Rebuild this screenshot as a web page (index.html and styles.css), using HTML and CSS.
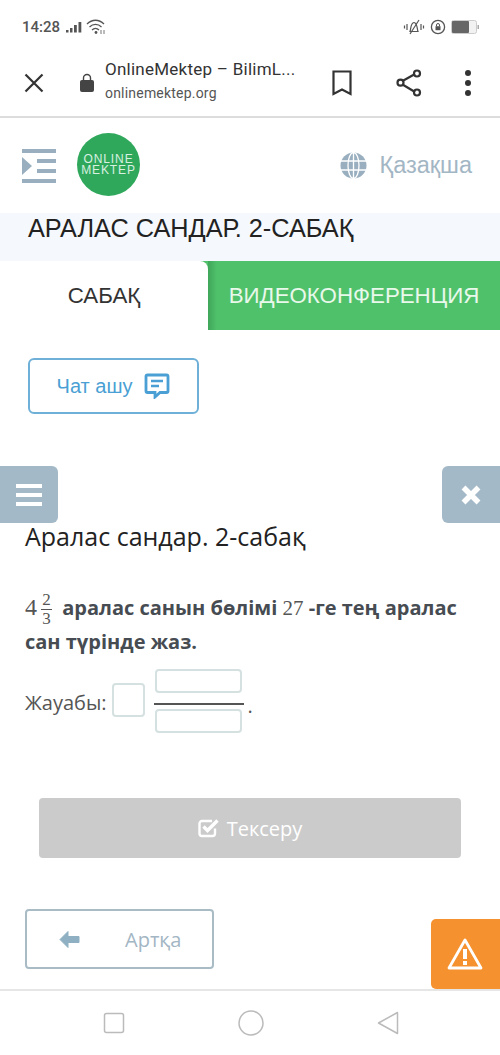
FILE: index.html
```html
<!DOCTYPE html>
<html lang="kk">
<head>
    <meta charset="UTF-8">
    <meta name="viewport" content="width=device-width, initial-scale=1.0">
    <title>Аралас сандар. 2-сабақ</title>
    <link rel="stylesheet" href="styles.css">
</head>
<body>
    <div class="page">
        <div class="status-bar">
            <div class="status-left">
                <span class="clock">14:28</span>
                <svg width="16" height="12" viewBox="0 0 16 12"><g fill="#555"><rect x="0" y="9" width="2.500" height="2.500"/><rect x="4" y="7" width="2.500" height="4.500"/><rect x="8" y="4" width="2.800" height="7.500"/><rect x="12.500" y="1" width="2.800" height="10.500"/></g></svg>
                <svg width="20" height="16" viewBox="0 0 20 16"><g fill="none" stroke="#555" stroke-width="1.300"><path d="M1 5 C6 0 13 0 18 5"/><path d="M3.500 8 C7 4.500 12 4.500 15.500 8"/><path d="M6 11 C8 9 11 9 13 11"/></g><circle cx="10" cy="13.500" r="1.400" fill="#555"/><path d="M15 15V11M18 15V11" stroke="#777" stroke-width="1"/></svg>
            </div>
            <div class="status-right">
                <svg width="22" height="16" viewBox="0 0 22 16"><g fill="none" stroke="#555" stroke-width="1.200"><path d="M7 12.500C8 10 7.500 4 11 3.500C14.500 4 14 10 15 12.500Z"/><path d="M16 1L7 15"/><path d="M4 5V11M1.500 6.500V9.500M18 5V11M20.500 6.500V9.500"/></g></svg>
                <svg width="16" height="16" viewBox="0 0 16 16"><circle cx="8" cy="8" r="6.600" fill="none" stroke="#555" stroke-width="1.300"/><rect x="5.500" y="7.200" width="5" height="4" fill="#555"/><path d="M6.500 7.200V6A1.500 1.500 0 0 1 9.500 6V7.200" fill="none" stroke="#555"/></svg>
                <svg width="28" height="14" viewBox="0 0 28 14"><rect x="0.500" y="0.500" width="25" height="13" rx="2" fill="#f2f2f2" stroke="#ccc"/><rect x="1" y="1" width="17" height="12" rx="1" fill="#666"/><rect x="26.500" y="5" width="1.500" height="4" fill="#aaa"/></svg>
            </div>
        </div>

        <div class="toolbar">
            <svg class="tb-close" width="20" height="20" viewBox="0 0 20 20"><path d="M1.500 1.500L18.500 18.500M18.500 1.500L1.500 18.500" stroke="#333" stroke-width="2.200"/></svg>
            <svg class="tb-lock" width="16" height="20" viewBox="0 0 16 20"><rect x="1" y="7" width="14" height="12" rx="2" fill="#444"/><path d="M4.500 7.500V5A3.500 3.500 0 0 1 11.500 5V7.500" fill="none" stroke="#444" stroke-width="1.400"/></svg>
            <div class="tb-address">
                <div class="tb-title">OnlineMektep – BilimL...</div>
                <div class="tb-url">onlinemektep.org</div>
            </div>
            <svg class="tb-mark" width="20" height="26" viewBox="0 0 20 26"><path d="M1.500 1.500H18.500V24L10 19.500L1.500 24Z" fill="none" stroke="#333" stroke-width="2.200"/></svg>
            <svg class="tb-share" width="26" height="28" viewBox="0 0 26 28"><g fill="none" stroke="#333" stroke-width="2.200"><path d="M6.500 12L19 5M6.500 15.500L19 23"/><circle cx="4.500" cy="13.700" r="3"/><circle cx="21" cy="4.500" r="3"/><circle cx="21" cy="23.500" r="3"/></g></svg>
            <div class="tb-more"><i></i><i></i><i></i></div>
        </div>

        <header class="site-header">
            <svg width="35" height="34" viewBox="0 0 35 34"><g fill="#99afbf"><rect y="0" width="34" height="4"/><rect x="15" y="10" width="19" height="4"/><rect x="15" y="20" width="19" height="4"/><rect y="30" width="34" height="4"/><path d="M0 8L10 17L0 26Z"/></g></svg>
            <div class="logo">ONLINE<br>MEKTEP</div>
            <div class="lang">
                <svg width="27" height="27" viewBox="0 0 27 27"><circle cx="13.500" cy="13.500" r="13" fill="#99afbf"/><g fill="none" stroke="#fff" stroke-width="1.300"><ellipse cx="13.500" cy="13.500" rx="5.500" ry="13"/><path d="M13.500 0V27M1 9H26M1 18H26"/></g></svg>
                <span>Қазақша</span>
            </div>
        </header>

        <div class="title-band">АРАЛАС САНДАР. 2-САБАҚ</div>

        <div class="tabs">
            <div class="tab tab-active">САБАҚ</div>
            <div class="tab tab-video">ВИДЕОКОНФЕРЕНЦИЯ</div>
        </div>

        <div class="chat-row">
            <button class="chat-btn">
                <span>Чат ашу</span>
                <svg width="26" height="26" viewBox="0 0 26 26"><path d="M3.500 2H22.500A1.500 1.500 0 0 1 24 3.500V18A1.500 1.500 0 0 1 22.500 19.500H16L11 24V19.500H3.500A1.500 1.500 0 0 1 2 18V3.500A1.500 1.500 0 0 1 3.500 2Z" fill="none" stroke="#4a9fd4" stroke-width="2.800"/><path d="M7 8H19M7 13H15" stroke="#4a9fd4" stroke-width="2.400"/></svg>
            </button>
        </div>

        <main class="lesson">
            <h1 class="lesson-title">Аралас сандар. 2-сабақ</h1>
            <p class="task">
                <span class="math math-whole">4</span><span class="math frac"><span>2</span><span class="frac-low">3</span></span>
                аралас санын бөлімі <span class="math">27</span> -ге тең аралас сан түрінде жаз.
            </p>
            <div class="answer">
                <span class="answer-label">Жауабы:</span>
                <span class="box box-whole"></span>
                <span class="answer-frac">
                    <span class="box box-part"></span>
                    <span class="box box-part"></span>
                </span>
                <span class="answer-dot">.</span>
            </div>
            <button class="check-btn">
                <svg width="22" height="20" viewBox="0 0 22 20"><path d="M17 10.500V15.500A2.500 2.500 0 0 1 14.500 18H4A2.500 2.500 0 0 1 1.500 15.500V5.500A2.500 2.500 0 0 1 4 3H14" fill="none" stroke="#fff" stroke-width="2.400"/><path d="M5.500 8.500L9.500 12.500L19.500 2.500" fill="none" stroke="#fff" stroke-width="3.400"/></svg>
                <span>Тексеру</span>
            </button>
            <button class="back-btn">
                <svg width="21" height="17" viewBox="0 0 21 17"><path d="M9 0.500L1 8.500L9 16.500V11.500H20V5.500H9Z" fill="#8fb0c2" stroke="#8fb0c2" stroke-linejoin="round"/></svg>
                <span>Артқа</span>
            </button>
        </main>

        <nav class="nav-bar">
            <svg width="22" height="22" viewBox="0 0 22 22"><rect x="1.500" y="1.500" width="19" height="19" rx="2" fill="none" stroke="#bbb" stroke-width="1.500"/></svg>
            <svg width="26" height="26" viewBox="0 0 26 26"><circle cx="13" cy="13" r="12" fill="none" stroke="#bbb" stroke-width="1.500"/></svg>
            <svg width="22" height="24" viewBox="0 0 22 24"><path d="M20.500 1.500V22.500L1.500 12Z" fill="none" stroke="#bbb" stroke-width="1.500" stroke-linejoin="round"/></svg>
        </nav>

        <button class="float-btn float-menu" aria-label="menu"><i></i><i></i><i></i></button>
        <button class="float-btn float-close" aria-label="close">
            <svg width="22" height="22" viewBox="0 0 22 22"><path d="M3.500 3.500L18.500 18.500M18.500 3.500L3.500 18.500" stroke="#fff" stroke-width="5.500"/></svg>
        </button>
        <button class="warn-btn" aria-label="warning">
            <svg width="36" height="32" viewBox="0 0 36 32"><path d="M18 2L34 30H2Z" fill="none" stroke="#fff" stroke-width="2.800" stroke-linejoin="round"/><path d="M18 11V21M18 23V27" stroke="#fff" stroke-width="4"/></svg>
        </button>
    </div>
</body>
</html>
```

FILE: styles.css
```css
* {
    box-sizing: border-box;
}
body {
    margin: 0;
    background: #fff;
    font-family: "Open Sans", sans-serif;
}
button {
    font-family: inherit;
    cursor: pointer;
}
.page {
    position: relative;
    width: 500px;
    height: 1055px;
    overflow: hidden;
    display: flex;
    flex-direction: column;
}

/* phone status bar */
.status-bar {
    height: 52px;
    padding: 2px 22px 0;
    display: flex;
    justify-content: space-between;
    align-items: center;
}
.status-left, .status-right {
    display: flex;
    align-items: center;
    gap: 4px;
}
.status-right {
    gap: 5px;
    margin-right: -1px;
}
.clock {
    font-family: Roboto, sans-serif;
    font-size: 15px;
    font-weight: 500;
    color: #555;
    margin-right: 2px;
}

/* browser toolbar */
.toolbar {
    height: 66px;
    flex: none;
    display: flex;
    align-items: center;
    border-bottom: 2px solid #ddd;
    padding-bottom: 2px;
}
.tb-close {
    margin-left: 24px;
}
.tb-lock {
    margin-left: 35px;
}
.tb-address {
    margin-left: 10px;
    width: 221px;
}
.tb-title {
    font-family: Roboto, sans-serif;
    font-size: 17px;
    line-height: 23px;
    letter-spacing: 0.25px;
    color: #333;
    white-space: nowrap;
    margin-top: -3px;
}
.tb-url {
    font-family: Roboto, sans-serif;
    font-size: 14px;
    line-height: 24px;
    letter-spacing: 0.2px;
    color: #555;
}
.tb-mark {
    margin-left: 6px;
}
.tb-share {
    margin-left: 44px;
}
.tb-more {
    margin-left: 43px;
    display: flex;
    flex-direction: column;
    gap: 4px;
}
.tb-more i {
    width: 6px;
    height: 6px;
    border-radius: 50%;
    background: #333;
}

/* site header */
.site-header {
    height: 95px;
    flex: none;
    padding: 0 28px 0 22px;
    display: flex;
    align-items: center;
}
.logo {
    width: 63px;
    height: 63px;
    margin: -2px 0 0 20px;
    border-radius: 50%;
    background: #2fa85c;
    color: #d8f0e0;
    font-family: "Liberation Sans", sans-serif;
    font-size: 12px;
    line-height: 11px;
    letter-spacing: 0.9px;
    text-align: center;
    display: flex;
    align-items: center;
    justify-content: center;
}
.lang {
    margin-left: auto;
    display: flex;
    align-items: center;
    gap: 12px;
    color: #a3b6c4;
    font-family: "Liberation Sans", sans-serif;
    font-size: 23.500px;
}

.title-band {
    height: 48px;
    flex: none;
    background: #f5f8fc;
    padding: 0 28px 18px;
    display: flex;
    align-items: center;
    font-family: "Liberation Sans", sans-serif;
    font-size: 25.300px;
    color: #222;
}

.tabs {
    height: 69px;
    flex: none;
    display: flex;
    font-family: "Liberation Sans", sans-serif;
    font-size: 22.300px;
    background: #50c16b;
}
.tab {
    display: flex;
    align-items: center;
    justify-content: center;
}
.tab-active {
    width: 208px;
    background: #fff;
    color: #333;
    border-top-right-radius: 8px;
}
.tab-video {
    flex: 1;
    color: #e8f8ea;
    background: linear-gradient(90deg, #3fa65a, #50c16b 9px);
}

.chat-row {
    padding: 28px 28px 0;
    flex: none;
}
.chat-btn {
    width: 171px;
    height: 56px;
    display: flex;
    align-items: center;
    justify-content: center;
    gap: 12px;
    background: #fff;
    border: 2px solid #6fb0d8;
    border-radius: 6px;
    color: #4a9fd4;
    font-family: "Liberation Sans", sans-serif;
    font-size: 20px;
}

/* lesson content */
.lesson {
    flex: 1;
    padding: 106px 25px 0;
    display: flex;
    flex-direction: column;
    align-items: flex-start;
}
.lesson-title {
    margin: 0;
    font-size: 25px;
    line-height: 32px;
    font-weight: 400;
    color: #222;
}
.task {
    margin: 39px 0 0;
    font-size: 20px;
    line-height: 33px;
    font-weight: 700;
    color: #464c52;
}
.math {
    font-family: "Liberation Serif", serif;
    font-weight: 400;
    font-size: 21px;
    color: #555;
}
.math-whole {
    font-size: 24px;
}
.frac {
    display: inline-flex;
    flex-direction: column;
    vertical-align: middle;
    width: 11px;
    margin: -8px 5px -8px 4px;
    font-size: 17px;
    line-height: 18px;
    text-align: center;
}
.frac-low {
    border-top: 1px solid #555;
}
.answer {
    margin-top: 11px;
    height: 64px;
    display: flex;
    align-items: center;
    font-size: 20px;
    color: #555;
}
.answer-label {
    margin-top: 3px;
}
.box {
    display: block;
    background: #fff;
    border: 2px solid #d5e0e0;
    border-radius: 4px;
}
.box-whole {
    width: 33px;
    height: 34px;
    margin: -3px 0 0 5px;
}
.answer-frac {
    margin-left: 9px;
    width: 90px;
    display: flex;
    flex-direction: column;
    align-items: center;
    gap: 16px;
    background: linear-gradient(#555, #555) 0 34px / 100% 2px no-repeat;
}
.box-part {
    width: 87px;
    height: 24px;
}
.answer-dot {
    margin: 8px 0 0 4px;
}
.check-btn {
    margin: 65px 0 0 14px;
    width: 422px;
    height: 60px;
    border: none;
    border-radius: 4px;
    background: #cbcbcb;
    color: #fff;
    font-size: 20px;
    display: flex;
    align-items: center;
    justify-content: center;
    gap: 7px;
}
.back-btn {
    margin-top: 51px;
    width: 189px;
    height: 60px;
    border: 2px solid #a9bcc6;
    border-radius: 4px;
    background: #fff;
    color: #a3b6c4;
    font-size: 20px;
    display: flex;
    align-items: center;
    padding: 0 0 0 32px;
    gap: 45px;
}

.nav-bar {
    height: 66px;
    flex: none;
    border-top: 2px solid #e6e6e6;
    padding: 0 101px 0 103px;
    display: flex;
    align-items: center;
    justify-content: space-between;
}

/* floating buttons over the page */
.float-btn {
    position: absolute;
    top: 466px;
    width: 58px;
    height: 57px;
    border: none;
    background: #a3b9c8;
    display: flex;
    align-items: center;
    justify-content: center;
}
.float-menu {
    left: 0;
    flex-direction: column;
    gap: 5px;
    border-radius: 0 6px 6px 0;
}
.float-menu i {
    width: 26px;
    height: 4px;
    background: #fff;
}
.float-close {
    right: 0;
    border-radius: 6px 0 0 6px;
}
.warn-btn {
    position: absolute;
    left: 431px;
    top: 919px;
    width: 69px;
    height: 70px;
    border: none;
    border-radius: 5px 0 0 5px;
    background: #f5922f;
    display: flex;
    align-items: center;
    justify-content: center;
    padding-right: 8px;
}
```
